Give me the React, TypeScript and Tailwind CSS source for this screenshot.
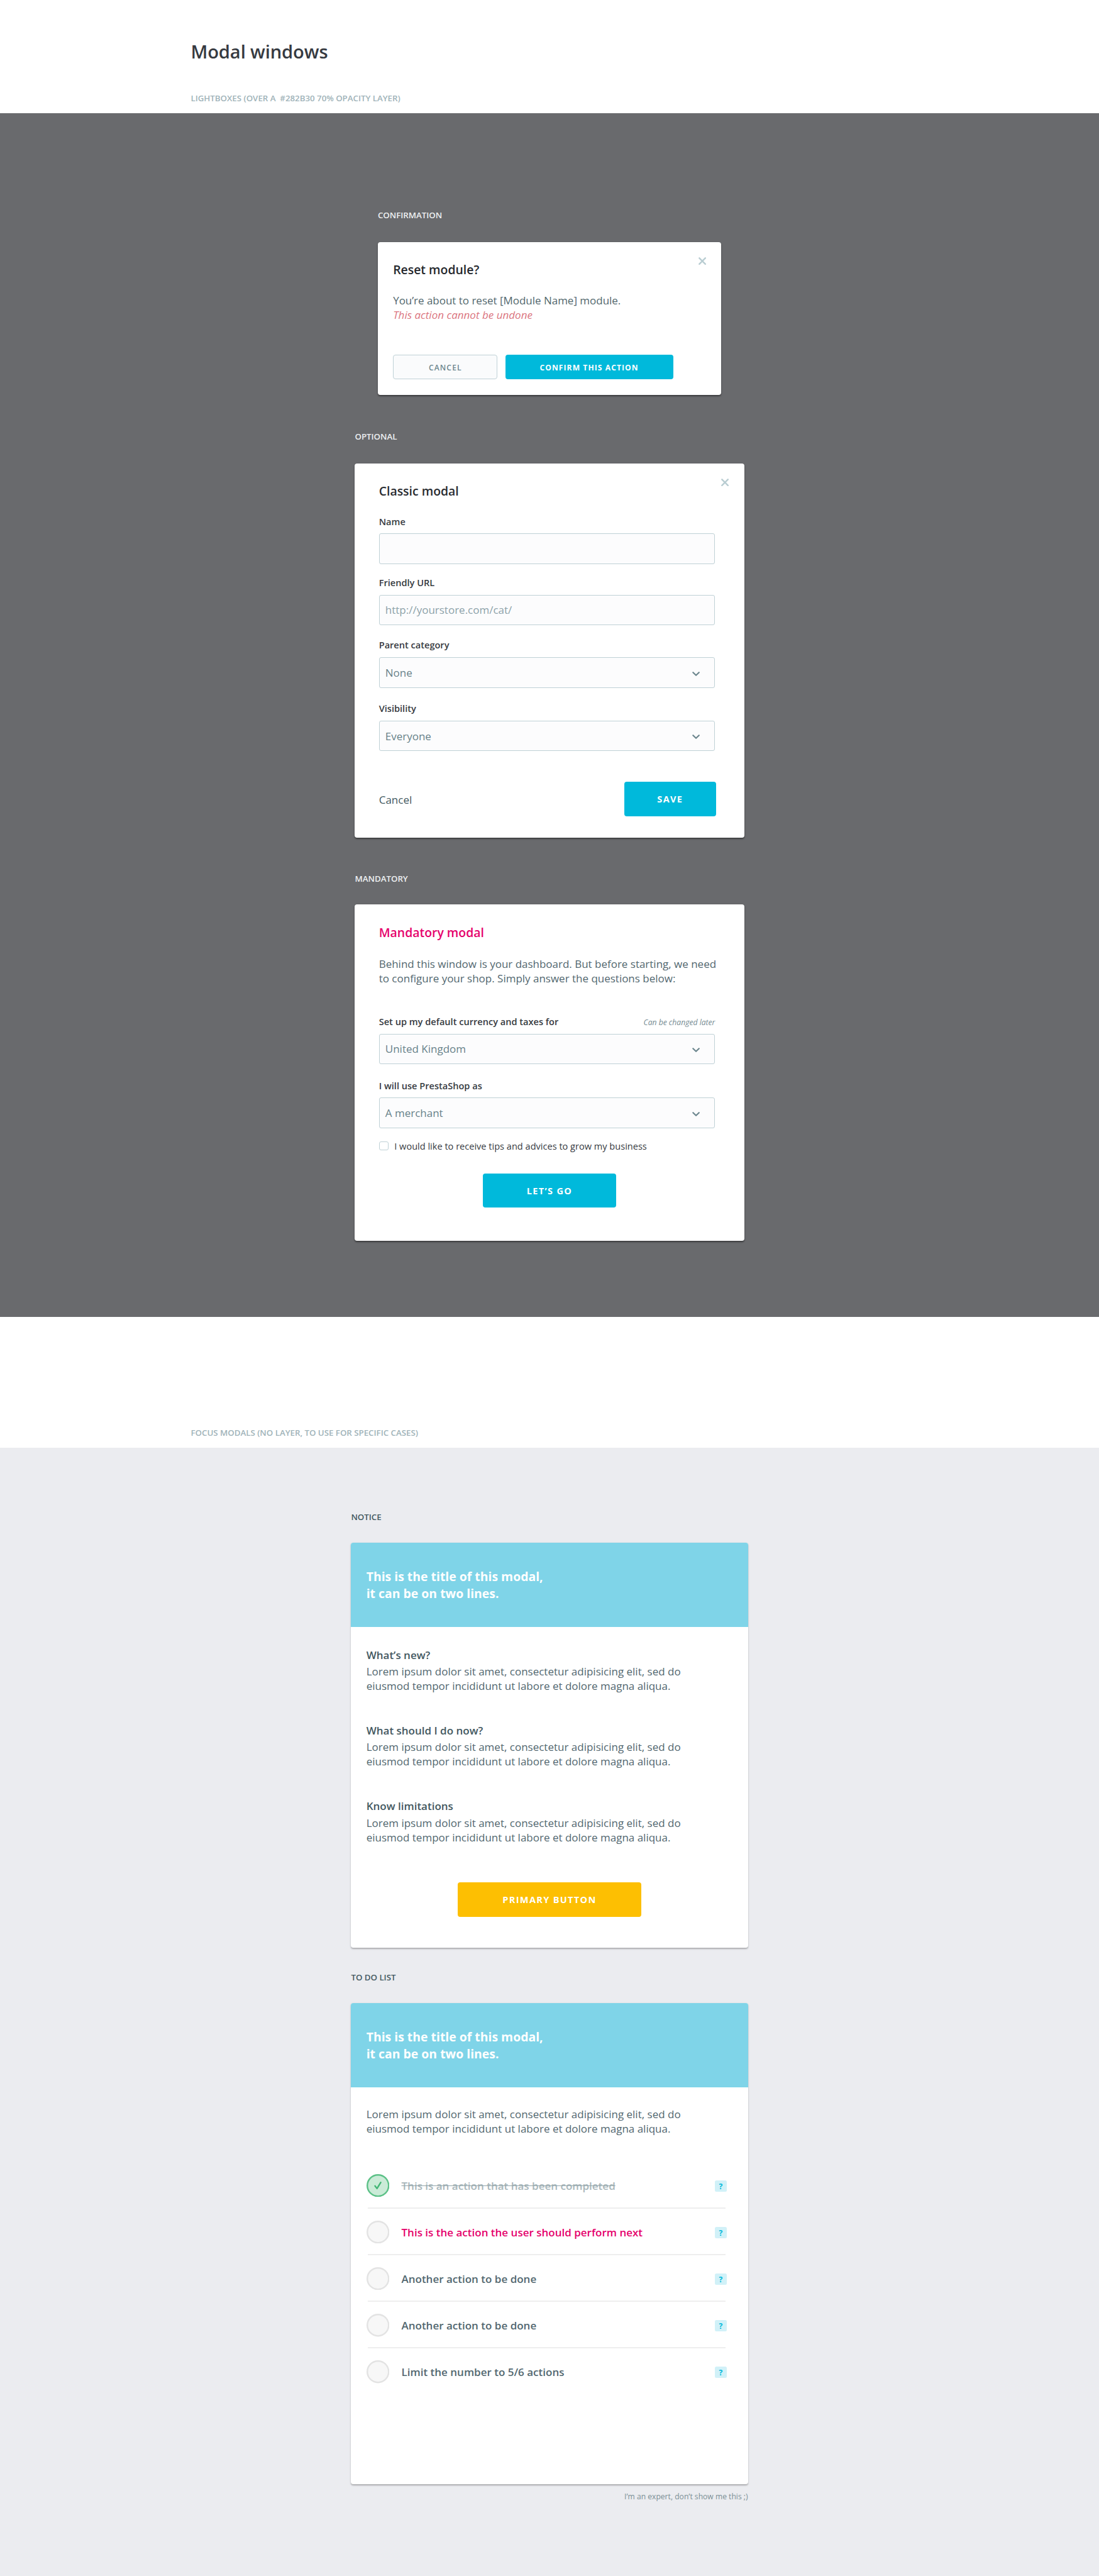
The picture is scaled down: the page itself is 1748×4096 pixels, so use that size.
import type { ReactNode } from "react";

/* All spacing utilities are multiples of one design unit (1748 / 1440 px), set on the page root. */

function SectionCaption({ children }: { children: ReactNode }) {
  return (
    <p className="-mb-0.75 pt-0.75 text-[13.35px] leading-16 font-semibold tracking-[-0.04px] whitespace-pre text-[#a0b3b9]">
      {children}
    </p>
  );
}

function Label({ tone, children }: { tone: "light" | "dark"; children: ReactNode }) {
  return (
    <p
      className={
        "-mb-0.75 pt-0.75 text-[13.35px] leading-16 font-semibold tracking-[-0.04px] whitespace-nowrap " +
        (tone === "light" ? "text-[#eef0f2]" : "text-[#43585f]")
      }
    >
      {children}
    </p>
  );
}

function CloseIcon() {
  return (
    <button aria-label="Close" className="absolute top-20 right-20 size-10">
      <svg viewBox="0 0 20 20" className="block size-full" fill="none" stroke="#b9cdd2" strokeWidth="4" strokeLinecap="round">
        <path d="M2.2 2.2 L17.8 17.8 M17.8 2.2 L2.2 17.8" />
      </svg>
    </button>
  );
}

function Chevron() {
  return (
    <svg viewBox="0 0 20 12" className="mt-3 block h-6 w-10" fill="none" stroke="#6c868e" strokeWidth="3.6" strokeLinecap="round" strokeLinejoin="round">
      <path d="M2.2 2 L10 9.6 L17.8 2" />
    </svg>
  );
}

function FieldLabel({ children }: { children: ReactNode }) {
  return <p className="text-[14.57px] leading-16 font-semibold whitespace-nowrap text-[#363a41]">{children}</p>;
}

function Field({ children, color = "text-[#68828a]", select = false }: { children?: ReactNode; color?: string; select?: boolean }) {
  return (
    <div className="mt-7.75 ml-0.5 flex h-40 w-440 items-center justify-between rounded-[3px] border border-[#bfd1d6] bg-[#fcfcfd] pr-19 pl-7">
      <span className={"text-[17px] leading-19 " + color}>{children}</span>
      {select && <Chevron />}
    </div>
  );
}

function LightboxCard({ children, className }: { children: ReactNode; className: string }) {
  return (
    <div className={"relative rounded-[4px] bg-white shadow-[0_1.2px_2.4px_rgba(0,0,0,0.45)] " + className}>{children}</div>
  );
}

function BannerCard({ children, className }: { children: ReactNode; className: string }) {
  return (
    <div className={"rounded-[4px] bg-white shadow-[0_1.2px_2.4px_rgba(0,0,0,0.28)] " + className}>
      <div className="h-110 rounded-t-[4px] bg-[#7fd4e8] pt-33.5 pl-20 text-[19.42px] leading-22 font-bold text-white">
        <p>This is the title of this modal,</p>
        <p>it can be on two lines.</p>
      </div>
      <div className="px-20">{children}</div>
    </div>
  );
}

function Lorem() {
  return (
    <p className="text-[17px] leading-19 whitespace-nowrap text-[#52676f]">
      Lorem ipsum dolor sit amet, consectetur adipisicing elit, sed do
      <br />
      eiusmod tempor incididunt ut labore et dolore magna aliqua.
    </p>
  );
}

function StatusCircle({ done }: { done: boolean }) {
  return (
    <svg viewBox="0 0 60 60" className="block size-30 shrink-0" fill="none">
      <circle cx="30" cy="30" r="28" fill={done ? "#caebd7" : "#f7f7f7"} stroke={done ? "#5cc187" : "#e3e3e3"} strokeWidth="4" />
      {done && (
        <path d="M22.2 31 L27.4 37.7 L37.3 21.8" stroke="#43b675" strokeWidth="4" strokeLinecap="round" strokeLinejoin="round" />
      )}
    </svg>
  );
}

const noticeSections = ["What’s new?", "What should I do now?", "Know limitations"];

const tasks: { text: string; state: "done" | "next" | "todo" }[] = [
  { text: "This is an action that has been completed", state: "done" },
  { text: "This is the action the user should perform next", state: "next" },
  { text: "Another action to be done", state: "todo" },
  { text: "Another action to be done", state: "todo" },
  { text: "Limit the number to 5/6 actions", state: "todo" },
];

const taskColor = {
  done: "text-[#a9b7bb] line-through decoration-[#92a5aa]",
  next: "text-[#e5006b]",
  todo: "text-[#52676f]",
};

export default function App() {
  return (
    <div className="w-[1748px] overflow-hidden bg-white font-['Open_Sans',sans-serif] [--spacing:1.213889px]">
      <header className="h-148 pt-52 pl-250">
        <h1 className="text-[29.13px] leading-32 font-semibold tracking-[-0.12px] text-[#363a41]">Modal windows</h1>
        <div className="pt-36.75">
          <SectionCaption>{"LIGHTBOXES (OVER A  #282B30 70% OPACITY LAYER)"}</SectionCaption>
        </div>
      </header>

      <section className="h-1577 bg-[#696a6d] pt-125.75">
        <div className="mx-auto w-450">
          <Label tone="light">CONFIRMATION</Label>
          <LightboxCard className="mt-27.25 h-200 px-20 pt-24">
            <CloseIcon />
            <h2 className="text-[19.42px] leading-24 font-semibold text-[#25282d]">Reset module?</h2>
            <p className="mt-19 text-[17px] leading-19 tracking-[-0.02px] text-[#52676d]">
              You’re about to reset [Module Name] module.
            </p>
            <p className="text-[17px] leading-19 text-[#db7580] italic">This action cannot be undone</p>
            <div className="mt-43 flex gap-10">
              <button className="h-32 w-137 rounded-[4px] border border-[#bfd1d6] bg-[#fafbfc] pt-1.5 text-[12.14px] font-semibold tracking-[0.09em] text-[#6c868e]">
                CANCEL
              </button>
              <button className="h-32 w-220 rounded-[4px] bg-[#00b9db] pt-1.5 text-[12.14px] font-bold tracking-[0.087em] text-white">
                CONFIRM THIS ACTION
              </button>
            </div>
          </LightboxCard>
        </div>

        <div className="mx-auto mt-46.75 w-510">
          <Label tone="light">OPTIONAL</Label>
          <LightboxCard className="mt-27.25 h-490 pt-24 pl-31.5">
            <CloseIcon />
            <h2 className="text-[19.42px] leading-24 font-semibold text-[#282b30]">Classic modal</h2>
            <div className="mt-20.25">
              <FieldLabel>Name</FieldLabel>
              <Field />
            </div>
            <div className="mt-16.25">
              <FieldLabel>Friendly URL</FieldLabel>
              <Field color="text-[#8da2a9]">http://yourstore.com/cat/</Field>
            </div>
            <div className="mt-18.25">
              <FieldLabel>Parent category</FieldLabel>
              <Field select>None</Field>
            </div>
            <div className="mt-19.25">
              <FieldLabel>Visibility</FieldLabel>
              <Field select>Everyone</Field>
            </div>
            <div className="mt-40 flex items-center justify-between pr-37">
              <button className="pt-2.5 text-[17px] leading-19 text-[#43585f]">Cancel</button>
              <button className="h-45 w-120 rounded-[4px] bg-[#00b9db] pt-1 text-[14.57px] font-bold tracking-[0.09em] text-white">
                SAVE
              </button>
            </div>
          </LightboxCard>
        </div>

        <div className="mx-auto mt-45.75 w-510">
          <Label tone="light">MANDATORY</Label>
          <LightboxCard className="mt-26.25 h-440 pt-24 pl-31.5">
            <h2 className="text-[19.42px] leading-24 font-semibold text-[#e5006b]">Mandatory modal</h2>
            <p className="mt-20 text-[17px] leading-19 tracking-[-0.01px] whitespace-nowrap text-[#52676f]">
              Behind this window is your dashboard. But before starting, we need
              <br />
              to configure your shop. Simply answer the questions below:
            </p>
            <div className="mt-39.25">
              <div className="flex items-baseline justify-between pr-38">
                <FieldLabel>Set up my default currency and taxes for</FieldLabel>
                <span className="text-[12.14px] leading-12 text-[#768b92] italic">Can be changed later</span>
              </div>
              <Field select>United Kingdom</Field>
            </div>
            <div className="mt-20.25">
              <FieldLabel>I will use PrestaShop as</FieldLabel>
              <Field select>A merchant</Field>
            </div>
            <label className="mt-17 ml-0.5 flex h-12 items-center gap-7.75 text-[14.57px] leading-12 whitespace-nowrap text-[#363a41]">
              <span className="size-12 shrink-0 rounded-[3px] border border-[#bfd1d6] bg-white" />
              I would like to receive tips and advices to grow my business
            </label>
            <button className="mt-30 ml-136.5 block h-45 w-174 rounded-[4px] bg-[#00b9db] pt-1 text-[14.57px] font-bold tracking-[0.09em] text-white">
              LET’S GO
            </button>
          </LightboxCard>
        </div>
      </section>

      <section className="h-171 pt-143.75 pl-250">
        <SectionCaption>FOCUS MODALS (NO LAYER, TO USE FOR SPECIFIC CASES)</SectionCaption>
      </section>

      <section className="h-1479 bg-[#ebecf0] pt-82.75">
        <div className="mx-auto w-520">
          <Label tone="dark">NOTICE</Label>
          <BannerCard className="mt-26.25 h-530">
            <div className="flex flex-col gap-39 pt-27">
              {noticeSections.map((title) => (
                <div key={title}>
                  <h3 className="mb-3 text-[17px] leading-19 font-semibold text-[#43585f]">{title}</h3>
                  <Lorem />
                </div>
              ))}
            </div>
            <button className="mx-auto mt-50 block h-45 w-240 rounded-[4px] bg-[#fdbf02] pt-1 text-[14.57px] font-bold tracking-[0.09em] text-white">
              PRIMARY BUTTON
            </button>
          </BannerCard>

          <div className="pt-30.75">
            <Label tone="dark">TO DO LIST</Label>
          </div>
          <BannerCard className="mt-26.25 h-630">
            <div className="pt-26">
              <Lorem />
            </div>
            <ul className="mt-50 w-472">
              {tasks.map((task, i) => (
                <li key={i}>
                  {i > 0 && <div className="mt-14 mb-16 ml-2 h-1 w-469 bg-[#eeeeee]" />}
                  <div className="flex h-30 items-center">
                    <StatusCircle done={task.state === "done"} />
                    <span className={"ml-16 text-[17px] leading-19 font-semibold whitespace-nowrap " + taskColor[task.state]}>
                      {task.text}
                    </span>
                    <span className="mt-1 ml-auto flex size-15 items-center justify-center rounded-[2.5px] bg-[#d1f1f8] pt-1.5 text-[12.14px] leading-15 font-bold text-[#00b9db]">
                      ?
                    </span>
                  </div>
                </li>
              ))}
            </ul>
          </BannerCard>
          <p className="mt-8.5 text-right text-[12.14px] leading-16 text-[#7b8f95]">I’m an expert, don’t show me this ;)</p>
        </div>
      </section>
    </div>
  );
}
